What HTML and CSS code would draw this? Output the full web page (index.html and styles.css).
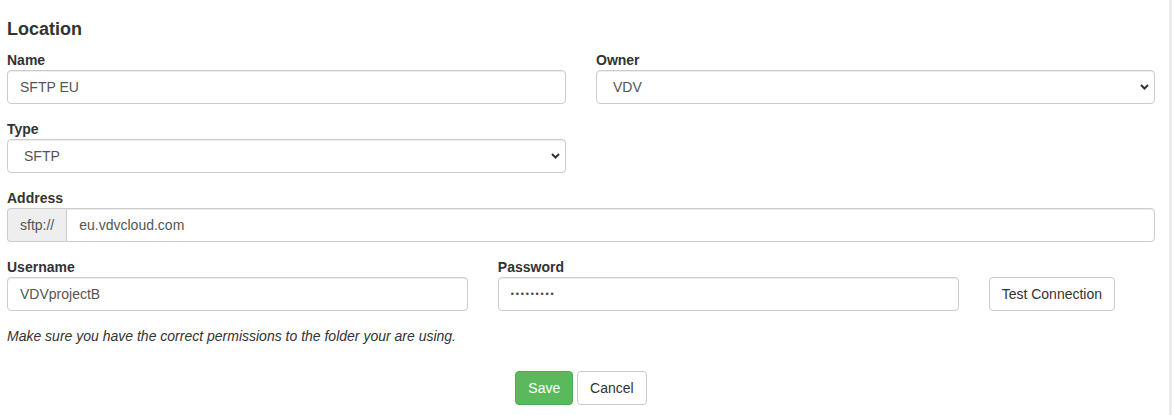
FILE: index.html
```html
<!DOCTYPE html>
<html lang="en">
<head>
<meta charset="utf-8">
<title>Location</title>
<link rel="stylesheet" href="styles.css">
</head>
<body>
<div class="page">
  <h4 class="title">Location</h4>

  <div class="row">
    <div class="col col-6">
      <div class="form-group">
        <label class="label">Name</label>
        <input class="form-control" type="text" value="SFTP EU">
      </div>
    </div>
    <div class="col col-6">
      <div class="form-group">
        <label class="label">Owner</label>
        <div class="select-wrap">
          <select class="form-control select"><option>VDV</option></select>
          <svg class="chevron" width="9" height="6" viewBox="0 0 9 6"><polyline points="1,1 4.5,4.5 8,1" fill="none" stroke="#333" stroke-width="2"/></svg>
        </div>
      </div>
    </div>
  </div>

  <div class="row">
    <div class="col col-6">
      <div class="form-group">
        <label class="label">Type</label>
        <div class="select-wrap">
          <select class="form-control select"><option>SFTP</option></select>
          <svg class="chevron" width="9" height="6" viewBox="0 0 9 6"><polyline points="1,1 4.5,4.5 8,1" fill="none" stroke="#333" stroke-width="2"/></svg>
        </div>
      </div>
    </div>
  </div>

  <div class="form-group">
    <label class="label">Address</label>
    <div class="input-group">
      <span class="addon">sftp://</span>
      <input class="form-control grouped" type="text" value="eu.vdvcloud.com">
    </div>
  </div>

  <div class="row">
    <div class="col col-5">
      <div class="form-group">
        <label class="label">Username</label>
        <input class="form-control" type="text" value="VDVprojectB">
      </div>
    </div>
    <div class="col col-5">
      <div class="form-group">
        <label class="label">Password</label>
        <input class="form-control password" type="password" value="secretpw1">
      </div>
    </div>
    <div class="col col-2">
      <div class="form-group spaced">
        <button class="btn" type="button">Test Connection</button>
      </div>
    </div>
  </div>

  <p class="help">Make sure you have the correct permissions to the folder your are using.</p>

  <div class="actions">
    <button class="btn btn-success" type="button">Save</button>
    <button class="btn" type="button">Cancel</button>
  </div>
</div>
</body>
</html>
```
FILE: styles.css
```css
* { box-sizing: border-box; }

html, body {
  margin: 0;
  padding: 0;
  background: #fff;
}

body {
  font-family: "Liberation Sans", Arial, Helvetica, sans-serif;
  font-size: 14px;
  line-height: 20px;
  color: #333;
}

.page {
  width: 1172px;
  min-height: 415px;
  padding: 20px 14px 0 7px;
  border-right: 3px solid #ebebeb;
}

.title {
  margin: 0 0 10px;
  font-size: 18px;
  line-height: 19.8px;
  font-weight: bold;
  color: #333;
}

.row {
  display: flex;
  margin: 0 -15px;
}

.col {
  padding: 0 15px;
}

.col-6 { flex: 0 0 50%; }
.col-5 { flex: 0 0 41.6667%; }
.col-2 { flex: 0 0 16.6667%; }

.form-group {
  margin-bottom: 15px;
}

.form-group.spaced {
  padding-top: 20px;
}

.label {
  display: block;
  font-weight: bold;
  line-height: 20px;
  margin: 0;
}

.form-control {
  display: block;
  width: 100%;
  height: 34px;
  padding: 6px 12px;
  font-family: inherit;
  font-size: 14px;
  line-height: 20px;
  color: #555;
  background: #fff;
  border: 1px solid #ccc;
  border-radius: 4px;
  box-shadow: inset 0 1px 1px rgba(0, 0, 0, 0.075);
  outline: none;
  margin: 0;
}

.form-control.password {
  font-size: 9px;
  letter-spacing: 1.8px;
  color: #444;
}

.select-wrap {
  position: relative;
}

.select {
  appearance: none;
  -webkit-appearance: none;
  padding-left: 16px;
  padding-right: 24px;
}

.chevron {
  position: absolute;
  right: 6px;
  top: 14px;
  pointer-events: none;
}

.input-group {
  display: flex;
}

.addon {
  flex: 0 0 auto;
  height: 34px;
  padding: 6px 12px;
  font-size: 14px;
  line-height: 20px;
  color: #555;
  background: #eee;
  border: 1px solid #ccc;
  border-right: 0;
  border-radius: 4px 0 0 4px;
}

.form-control.grouped {
  flex: 1 1 auto;
  border-radius: 0 4px 4px 0;
}

.btn {
  display: inline-block;
  height: 34px;
  padding: 6px 12px;
  font-family: inherit;
  font-size: 14px;
  line-height: 20px;
  color: #333;
  background: #fff;
  border: 1px solid #ccc;
  border-radius: 4px;
  cursor: pointer;
  margin: 0;
}

.btn-success {
  color: #fff;
  background: #5cb85c;
  border-color: #4cae4c;
}

.help {
  margin: 0 0 25px;
  font-style: italic;
  color: #333;
  line-height: 20px;
}

.actions {
  text-align: center;
}
```
